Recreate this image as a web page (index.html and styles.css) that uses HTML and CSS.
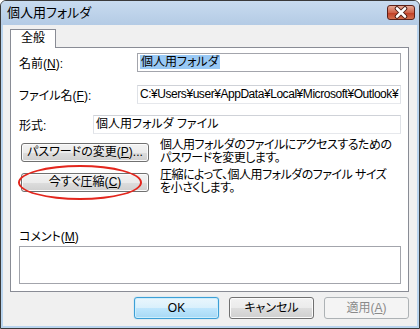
FILE: index.html
```html
<!DOCTYPE html>
<html lang="ja">
<head>
    <meta charset="UTF-8">
    <title>個人用フォルダ</title>
    <link rel="stylesheet" href="styles.css">
</head>
<body>
    <div class="window">
        <div class="titlebar">
            <span class="title">個人用フォルダ</span>
            <span class="close">
                <svg width="26" height="13" viewBox="0 0 26 13">
                    <path d="M9 2.5 L17 10.5 M17 2.5 L9 10.5" stroke="#4a1c14" stroke-width="4.5" stroke-linecap="round"/>
                    <path d="M9 2.5 L17 10.5 M17 2.5 L9 10.5" stroke="#fff" stroke-width="2.6" stroke-linecap="round"/>
                </svg>
            </span>
        </div>

        <div class="client">
            <div class="tabs">
                <span class="tab">全般</span>
            </div>

            <div class="panel">
                <div class="row row-name">
                    <span class="lbl wide">名前(<u>N</u>):</span>
                    <div class="field"><span class="sel">個人用フォルダ</span></div>
                </div>
                <div class="row row-file">
                    <span class="lbl wide">ファイル名(<u>F</u>):</span>
                    <div class="field ro path">C:¥Users¥user¥AppData¥Local¥Microsoft¥Outlook¥</div>
                </div>
                <div class="row row-type">
                    <span class="lbl narrow">形式:</span>
                    <div class="field ro">個人用フォルダ ファイル</div>
                </div>

                <div class="action action-pw">
                    <button class="btn btn-wide">パスワードの変更(<u>P</u>)...</button>
                    <p class="desc">個人用フォルダのファイルにアクセスするための<br>パスワードを変更します。</p>
                </div>
                <div class="action action-compact">
                    <div class="btn-wrap">
                        <button class="btn btn-wide">今すぐ圧縮(<u>C</u>)</button>
                        <span class="ring"></span>
                    </div>
                    <p class="desc">圧縮によって、個人用フォルダのファイル サイズ<br>を小さくします。</p>
                </div>

                <div class="comment-label">コメント(<u>M</u>)</div>
                <div class="comment-box"></div>
            </div>

            <div class="footer">
                <button class="btn btn-foot default">OK</button>
                <button class="btn btn-foot">キャンセル</button>
                <button class="btn btn-foot" disabled>適用(<u>A</u>)</button>
            </div>
        </div>
    </div>
</body>
</html>
```

FILE: styles.css
```css
body {
    margin: 0;
    font-family: "Liberation Sans", "Noto Sans CJK JP", sans-serif;
    font-size: 12px;
    font-feature-settings: "palt";
    color: #000;
}
.window {
    width: 420px;
    height: 329px;
    box-sizing: border-box;
    border: 1px solid #3a3a3a;
    border-radius: 6px 6px 0 0;
    background-color: #b9d4ee;
    display: flex;
    flex-direction: column;
    overflow: hidden;
}
.titlebar {
    height: 24px;
    flex: none;
    display: flex;
    align-items: center;
    padding: 0 4px 0 6px;
    background: linear-gradient(#c8dbef, #b4cbe5);
}
.title {
    flex: 1;
    font-size: 13px;
    line-height: 16px;
}
.close {
    width: 28px;
    height: 15px;
    box-sizing: border-box;
    border: 1px solid #5c2018;
    border-radius: 3px;
    background: linear-gradient(#e6a894, #d0634a 50%, #bf3b22 51%, #d4704f);
    margin-top: -1px;
    display: flex;
    align-items: center;
    justify-content: center;
}
.client {
    flex: 1;
    margin: 0 2px 2px;
    background-color: #f0f0f0;
    padding: 4px 8px 0 7px;
    display: flex;
    flex-direction: column;
}
.tabs {
    display: flex;
}
.tab {
    box-sizing: border-box;
    height: 19px;
    padding: 0 10px;
    border: 1px solid #898c95;
    border-bottom: 0;
    background-color: #fff;
    line-height: 17px;
    position: relative;
    z-index: 1;
    margin-bottom: -1px;
}
.panel {
    box-sizing: border-box;
    height: 245px;
    flex: none;
    border: 1px solid #898c95;
    background-color: #fff;
    padding: 0 7px 0 8px;
}
.row {
    display: flex;
    align-items: center;
    height: 19px;
}
.row-name {
    margin-top: 5px;
}
.row-file {
    margin-top: 13px;
}
.row-type {
    margin-top: 11px;
}
.lbl.wide {
    width: 118px;
}
.lbl.narrow {
    width: 74px;
}
.field {
    flex: 1;
    height: 19px;
    box-sizing: border-box;
    border: 1px solid #a3a5ac;
    padding: 0 2px;
    line-height: 17px;
    white-space: nowrap;
    overflow: hidden;
}
.field.ro {
    border-color: #cfd2d8 #dfe2e7 #e6e8ec #dfe2e7;
}
.field.path {
    letter-spacing: -0.45px;
}
.sel {
    background-color: #99c9f5;
    padding: 0 1px;
}
.action {
    display: flex;
    align-items: flex-start;
    height: 19px;
}
.action-pw {
    margin-top: 9px;
}
.action-compact {
    margin-top: 11px;
}
.btn {
    box-sizing: border-box;
    border: 1px solid #707070;
    border-radius: 3px;
    background: linear-gradient(#f2f2f2, #ebebeb 50%, #dddddd 51%, #cfcfcf);
    box-shadow: inset 0 0 0 1px #fbfbfb;
    font: inherit;
    color: #000;
    padding: 0;
}
.btn-wide {
    width: 128px;
    height: 19px;
    margin-left: 2px;
    line-height: 15px;
    flex: none;
}
.btn-wrap {
    position: relative;
    flex: none;
}
.ring {
    position: absolute;
    left: -1px;
    top: -8px;
    width: 124px;
    height: 35px;
    box-sizing: border-box;
    border: 2px solid #e3261d;
    border-radius: 50%;
}
.desc {
    margin: -4px 0 0 11px;
    line-height: 13px;
    white-space: nowrap;
    letter-spacing: -0.5px;
}
.comment-label {
    margin-top: 38px;
    height: 14px;
    line-height: 14px;
}
.comment-box {
    margin-top: 2px;
    height: 38px;
    box-sizing: border-box;
    border: 1px solid #a3a5ac;
}
.footer {
    margin-top: 5px;
    display: flex;
    justify-content: flex-end;
    gap: 10px;
}
.btn-foot {
    width: 85px;
    height: 22px;
    line-height: 18px;
}
.btn.default {
    border-color: #3c9fd6;
    background: linear-gradient(#eaf6fd, #d9f0fc 50%, #bee6fd 51%, #a7d9f5);
    box-shadow: inset 0 0 0 1px #cdeefc, 0 0 1px #49b6f0;
}
.btn:disabled {
    border-color: #adb2b5;
    background: #f4f4f4;
    box-shadow: none;
    color: #8a8a8a;
}
```
